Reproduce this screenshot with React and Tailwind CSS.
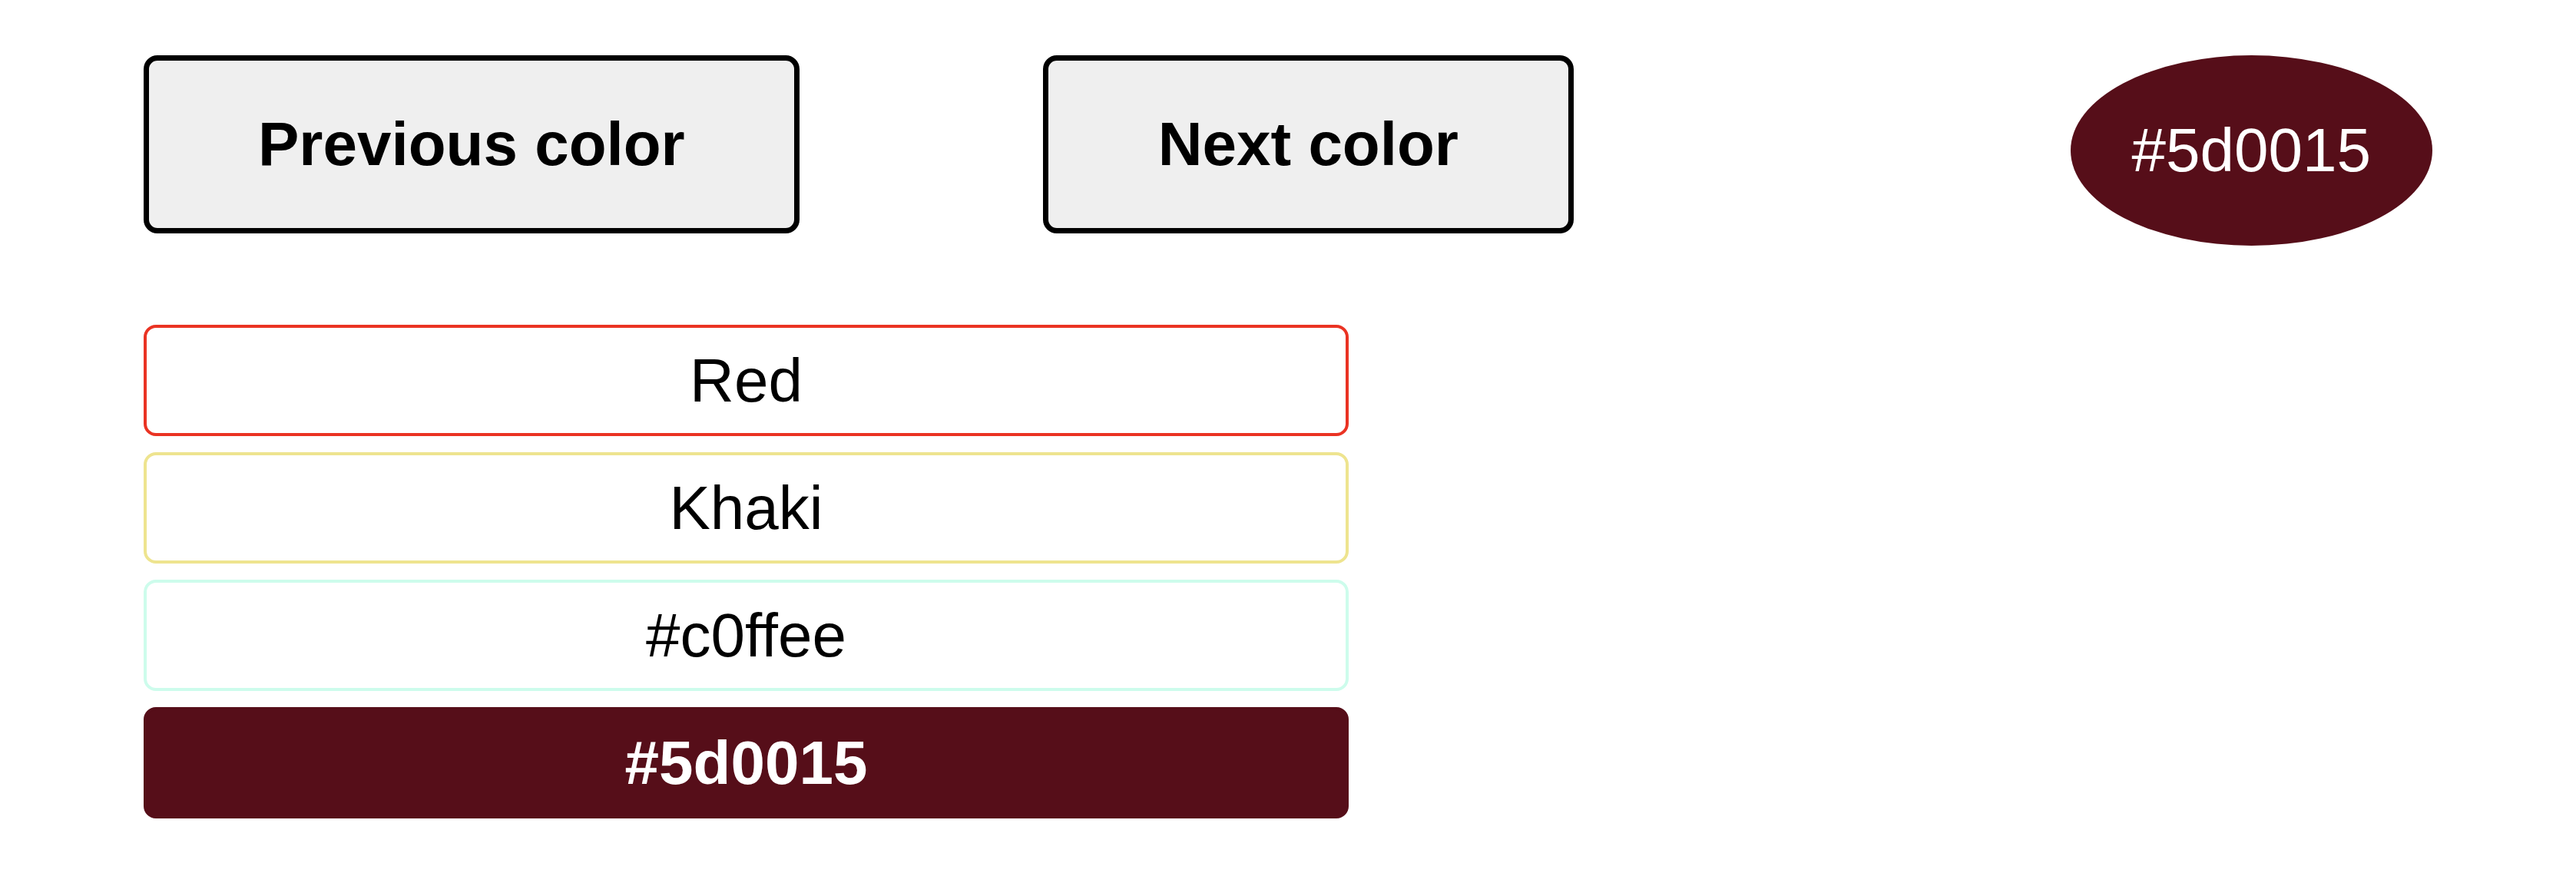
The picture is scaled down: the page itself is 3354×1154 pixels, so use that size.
import React, { useState } from "react";

const COLORS = [
  { name: "Red", border: "border-[#ea3323]" },
  { name: "Khaki", border: "border-[#eee48f]" },
  { name: "#c0ffee", border: "border-[#cdfcec]" },
  { name: "#5d0015", border: "border-[#560e19]" },
];

const App = () => {
  const [selected, setSelected] = useState(3);

  const prevColor = () =>
    setSelected((i) => (i - 1 + COLORS.length) % COLORS.length);
  const nextColor = () => setSelected((i) => (i + 1) % COLORS.length);

  return (
    <div className="min-h-screen bg-white px-[187px] pt-[72px] font-['Liberation_Sans',Arial,sans-serif] text-black">
      {/* Controls + current swatch */}
      <div className="flex items-start justify-between">
        <div className="flex gap-[317px]">
          <button
            onClick={prevColor}
            className="h-[232px] px-[142px] border-[7px] border-black rounded-[18px] bg-[#efefef] text-[80px] font-bold leading-none"
          >
            Previous color
          </button>
          <button
            onClick={nextColor}
            className="h-[232px] px-[143px] border-[7px] border-black rounded-[18px] bg-[#efefef] text-[80px] font-bold leading-none"
          >
            Next color
          </button>
        </div>
        <div className="rounded-[50%] bg-[#560e19] p-[80px] text-[80px] leading-[88px] text-white">
          #5d0015
        </div>
      </div>

      {/* Color list */}
      <ul className="mt-[103px] flex w-[1569px] flex-col gap-[21px]">
        {COLORS.map((c, i) => (
          <li
            key={c.name}
            onClick={() => setSelected(i)}
            className={
              "flex h-[145px] items-center justify-center rounded-[16px] border-4 text-[80px] leading-none " +
              c.border +
              (i === selected
                ? " bg-[#560e19] font-bold text-white"
                : " bg-white")
            }
          >
            {c.name}
          </li>
        ))}
      </ul>
    </div>
  );
};

export default App;
